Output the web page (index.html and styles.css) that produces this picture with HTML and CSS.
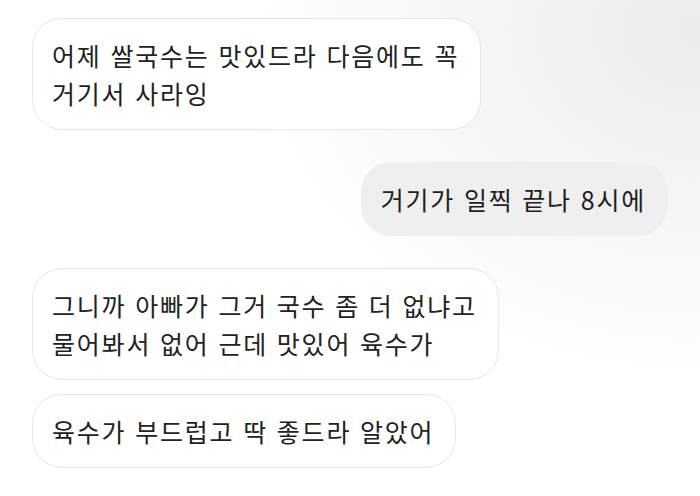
FILE: index.html
```html
<!DOCTYPE html>
<html lang="ko">
<head>
    <meta charset="UTF-8">
    <meta name="viewport" content="width=device-width, initial-scale=1.0">
    <title>대화</title>
    <link rel="stylesheet" href="styles.css">
</head>
<body>
    <div class="chat">
        <div class="bubble them first">어제 쌀국수는 맛있드라 다음에도 꼭<br>거기서 사라잉</div>
        <div class="bubble me">거기가 일찍 끝나 8시에</div>
        <div class="bubble them">그니까 아빠가 그거 국수 좀 더 없냐고<br>물어봐서 없어 근데 맛있어 육수가</div>
        <div class="bubble them tight">육수가 부드럽고 딱 좋드라 알았어</div>
    </div>
</body>
</html>
```

FILE: styles.css
```css
html, body {
    margin: 0;
    height: 100%;
}
body {
    font-family: "Noto Sans CJK KR", "Noto Sans", sans-serif;
    background: radial-gradient(ellipse 460px 360px at 700px 30px, #ebebeb 0%, #f5f5f5 45%, #ffffff 100%);
    color: #222;
    overflow: hidden;
}
.chat {
    display: flex;
    flex-direction: column;
    align-items: flex-start;
    padding: 18px 32px 0 32px;
}
.bubble {
    font-size: 25px;
    line-height: 38px;
    letter-spacing: 1.8px;
    padding: 17px 21px 17px 19px;
    border-radius: 30px;
    box-sizing: border-box;
}
.them {
    background: #fff;
    border: 1.5px solid #e6e6e6;
    margin-top: 32px;
}
.them.first { margin-top: 0; }
.them.tight { margin-top: 14px; }
.me {
    align-self: flex-end;
    background: #efefef;
    border: 1.5px solid #efefef;
    margin-top: 32px;
}
```
